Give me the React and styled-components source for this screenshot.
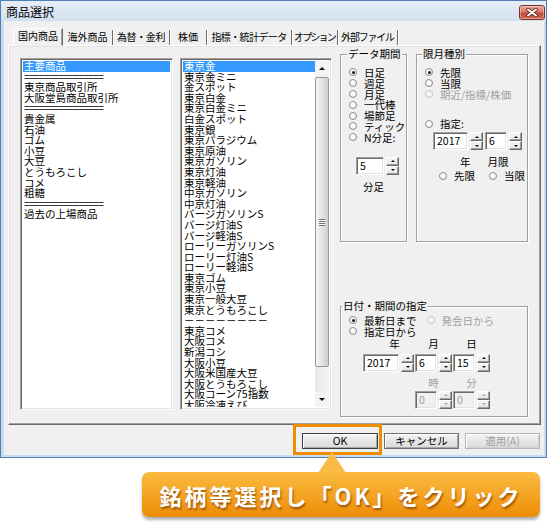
import React from 'react';
import styled, { createGlobalStyle, css } from 'styled-components';

const UI_FONT = `"Noto Sans CJK JP", "Noto Sans", sans-serif`;

const GlobalStyle = createGlobalStyle`
  html, body {
    margin: 0;
    padding: 0;
    background: #fff;
  }
  body {
    font-family: ${UI_FONT};
  }
  * {
    box-sizing: border-box;
  }
`;

const Page = styled.div`
  width: 550px;
  height: 525px;
  overflow: hidden;
  font-family: ${UI_FONT};
  font-size: 10.5px;
  color: #000;
`;

const Window = styled.div`
  width: 547px;
  height: 458px;
  border: 1px solid #4f7fb3;
  background: #c9dbee;
  padding: 0 2px 2px 3px;
  display: flex;
  flex-direction: column;
`;

const TitleBar = styled.div`
  height: 20px;
  flex: none;
  display: flex;
  justify-content: space-between;
  align-items: flex-start;
  margin: 0 -2px 0 -3px;
  padding: 0 1px 0 5px;
  background: linear-gradient(#e6eef8, #d2e0f0);
`;

const Title = styled.div`
  font-size: 12px;
  line-height: 14px;
  padding-top: 4px;
`;

const CloseButton = styled.div`
  width: 26px;
  height: 15px;
  margin-top: 4px;
  border: 1px solid #7d3129;
  border-radius: 3px;
  background: linear-gradient(#eaa899 0%, #d77766 45%, #c24a38 55%, #d06a52 100%);
  box-shadow: inset 0 0 0 1px rgba(255, 255, 255, 0.35);
  display: flex;
  align-items: center;
  justify-content: center;
`;

const Client = styled.div`
  flex: 1;
  background: #f0f0f0;
  padding: 7px 3px 0 4px;
  display: flex;
  flex-direction: column;
`;

const TabRow = styled.div`
  display: flex;
  align-items: flex-end;
  height: 17px;
  padding-left: 5px;
`;

const Tab = styled.div`
  width: ${p => p.$w}px;
  display: flex;
  align-items: center;
  justify-content: center;
  white-space: nowrap;
  font-size: 10px;
  letter-spacing: ${p => p.$ls || 0}px;
  line-height: 12px;
  ${p =>
    p.$active
      ? css`
          height: 18px;
          margin-bottom: -1px;
          position: relative;
          z-index: 1;
          background: #f0f0f0;
          border: 1px solid;
          border-color: #fff #696969 transparent #fff;
          box-shadow: inset -1px 0 0 #a0a0a0;
          padding-bottom: 2px;
        `
      : css`
          height: 15px;
          border-right: 1px solid #6d6d6d;
          box-shadow: 1px 0 0 #fff;
          padding-bottom: 1px;
        `}
`;

const TabPanel = styled.div`
  height: 380px;
  flex: none;
  border: 1px solid;
  border-color: #fff #696969 #696969 #fff;
  box-shadow: inset -1px -1px 0 #a0a0a0, inset 1px 1px 0 #e3e3e3;
  display: flex;
  align-items: flex-start;
  padding: 8px 0 0 11px;
`;

const ListBox = styled.div`
  width: ${p => p.$w}px;
  height: 352px;
  margin-top: 4px;
  margin-right: ${p => p.$gap}px;
  flex: none;
  background: #fff;
  border: 1px solid;
  border-color: #a0a0a0 #fff #fff #a0a0a0;
  box-shadow: inset 1px 1px 0 #696969, inset -1px -1px 0 #e3e3e3;
  padding: 2px;
  display: flex;
  overflow: hidden;
`;

const Items = styled.div`
  flex: 1;
  overflow: hidden;
`;

const Item = styled.div`
  height: 10.6px;
  line-height: 10.6px;
  white-space: nowrap;
  padding-left: 1px;
  letter-spacing: ${p => (p.$rule ? '-0.9px' : '0')};
  ${p =>
    p.$selected &&
    css`
      background: #3399ff;
      color: #fff;
    `}
`;

const Scrollbar = styled.div`
  width: 14px;
  flex: none;
  display: flex;
  flex-direction: column;
  background: linear-gradient(90deg, #e9e9e9, #f4f4f4);
`;

const ScrollArrow = styled.div`
  height: 15px;
  flex: none;
  display: flex;
  align-items: center;
  justify-content: center;
  background: #f3f3f3;
`;

const ScrollTrack = styled.div`
  flex: 1;
`;

const Triangle = styled.span`
  width: 0;
  height: 0;
  border-left: ${p => p.$size}px solid transparent;
  border-right: ${p => p.$size}px solid transparent;
  ${p =>
    p.$up
      ? css`
          border-bottom: ${p.$size - 0.5}px solid ${p.$disabled ? '#a8a8a8' : '#111'};
        `
      : css`
          border-top: ${p.$size - 0.5}px solid ${p.$disabled ? '#a8a8a8' : '#111'};
        `}
`;

const Thumb = styled.div`
  height: 290px;
  margin: 1px 0;
  flex: none;
  border: 1px solid #989898;
  border-radius: 2px;
  background: linear-gradient(90deg, #f4f4f4, #e2e2e2 55%, #cdcdcd);
  display: flex;
  align-items: center;
  justify-content: center;
`;

const Grip = styled.div`
  width: 6px;
  height: 7px;
  background: repeating-linear-gradient(#6f6f6f 0 1px, #fafafa 1px 2px);
`;

const RightColumn = styled.div`
  width: 188px;
  flex: none;
  display: flex;
  flex-direction: column;
`;

const TopGroups = styled.div`
  display: flex;
  gap: 9px;
`;

const GroupBox = styled.div`
  position: relative;
  width: ${p => p.$w}px;
  height: ${p => p.$h}px;
  margin-top: ${p => p.$mt || 0}px;
  border: 1px solid #a0a0a0;
  box-shadow: inset 1px 1px 0 #fff, 1px 1px 0 #fff;
  padding: ${p => p.$pad};
  display: flex;
  flex-direction: column;
`;

const Legend = styled.span`
  position: absolute;
  top: -7px;
  left: ${p => p.$left}px;
  padding: 0 1px;
  line-height: 12px;
  background: #f0f0f0;
  white-space: nowrap;
`;

const RadioRow = styled.div`
  display: flex;
  align-items: center;
  height: 10.8px;
  gap: ${p => p.$gap || 0}px;
  margin-top: ${p => p.$mt || 0}px;
  padding-left: ${p => p.$pl || 0}px;
`;

const RadioItem = styled.span`
  display: inline-flex;
  align-items: center;
  gap: 7px;
  white-space: nowrap;
  color: ${p => (p.$disabled ? '#a0a0a0' : '#000')};
`;

const RadioDot = styled.span`
  position: relative;
  flex: none;
  width: 8px;
  height: 8px;
  border-radius: 50%;
  border: 1px solid ${p => (p.$disabled ? '#c6c6c6' : '#8c8c8c')};
  background: ${p => (p.$disabled ? '#f5f5f5' : 'radial-gradient(circle at 40% 35%, #fff 30%, #e3e3e3)')};
  ${p =>
    p.$checked &&
    css`
      &::after {
        content: '';
        position: absolute;
        inset: 0;
        margin: auto;
        width: 3px;
        height: 3px;
        border-radius: 50%;
        background: #1a1a1a;
      }
    `}
`;

const SpinRow = styled.div`
  display: flex;
  gap: ${p => p.$gap || 0}px;
  margin-top: ${p => p.$mt || 0}px;
  padding-left: ${p => p.$pl || 0}px;
`;

const SpinWrap = styled.div`
  display: flex;
  gap: 2px;
  height: 18px;
`;

const SpinEdit = styled.div`
  width: ${p => p.$w}px;
  height: 18px;
  border: 1px solid;
  border-color: #a0a0a0 #fff #fff #a0a0a0;
  box-shadow: inset 1px 1px 0 #696969, inset -1px -1px 0 #e3e3e3;
  background: ${p => (p.$disabled ? '#f0f0f0' : '#fff')};
  color: ${p => (p.$disabled ? '#a0a0a0' : '#000')};
  padding: 2px 0 0 3px;
  line-height: 11px;
`;

const SpinButtons = styled.div`
  width: 13px;
  display: flex;
  flex-direction: column;
`;

const SpinButton = styled.div`
  flex: 1;
  display: flex;
  align-items: center;
  justify-content: center;
  border: 1px solid;
  border-color: #fff #696969 #696969 #fff;
  box-shadow: inset -1px -1px 0 #a0a0a0;
  background: linear-gradient(#f6f6f6, #e4e4e4);
`;

const Caption = styled.div`
  height: 11px;
  line-height: 11px;
  white-space: nowrap;
  margin-top: ${p => p.$mt || 0}px;
  padding-left: ${p => p.$pl || 0}px;
  display: flex;
  gap: ${p => p.$gap || 0}px;
  color: ${p => (p.$disabled ? '#a0a0a0' : '#000')};
`;

const DateGrid = styled.div`
  display: grid;
  grid-template-columns: 51px 37px 37px;
  column-gap: 1px;
  margin-top: ${p => p.$mt || 0}px;
  padding-left: 14px;
  align-items: center;
  color: ${p => (p.$disabled ? '#a0a0a0' : '#000')};
`;

const GridLabel = styled.div`
  grid-column: ${p => p.$col};
  height: 11px;
  line-height: 11px;
  text-align: center;
  padding-left: ${p => p.$shift || 0}px;
`;

const GridCell = styled.div`
  grid-column: ${p => p.$col};
`;

const ButtonRow = styled.div`
  display: flex;
  justify-content: flex-end;
  gap: 6px;
  margin-top: 8px;
  padding-right: 1px;
`;

const Button = styled.div`
  position: relative;
  width: ${p => p.$w}px;
  height: 16px;
  display: flex;
  align-items: center;
  justify-content: center;
  border: 1px solid ${p => (p.$disabled ? '#b5b5b5' : p.$default ? '#3c3c3c' : '#707070')};
  background: linear-gradient(#f4f4f4, #e6e6e6 50%, #dadada);
  box-shadow: inset 1px 1px 0 #fff, inset -1px -1px 0 ${p => (p.$disabled ? '#d0d0d0' : '#a8a8a8')};
  color: ${p => (p.$disabled ? '#a0a0a0' : '#000')};
  line-height: 12px;
  ${p =>
    p.$highlight &&
    css`
      &::after {
        content: '';
        position: absolute;
        left: -10px;
        top: -10px;
        right: -5px;
        bottom: -7px;
        border: 3px solid #f08c00;
      }
    `}
`;

const Callout = styled.div`
  position: relative;
  z-index: 2;
  width: 398px;
  height: 45px;
  margin: 14px 0 0 142px;
  border-radius: 7px;
  background: linear-gradient(#f9ba3f 0%, #f5a524 50%, #ec8c06 100%);
  box-shadow: 0 3px 3px rgba(0, 0, 0, 0.3);
  display: flex;
  align-items: center;
  justify-content: center;
`;

const Pointer = styled.span`
  position: absolute;
  left: 176px;
  top: -20px;
  width: 0;
  height: 0;
  border-left: 14px solid transparent;
  border-right: 14px solid transparent;
  border-bottom: 21px solid #f9bb45;
`;

const CalloutText = styled.div`
  color: #fff;
  font-family: ${UI_FONT};
  font-size: 22px;
  font-weight: 700;
  letter-spacing: 3px;
  line-height: 26px;
  white-space: nowrap;
  text-shadow: 1px 2px 2px rgba(130, 60, 0, 0.75);
`;

const tabs = [
  { label: '国内商品', w: 50, active: true },
  { label: '海外商品', w: 50 },
  { label: '為替・金利', w: 57, ls: -0.4 },
  { label: '株価', w: 37 },
  { label: '指標・統計データ', w: 85, ls: -0.6 },
  { label: 'オプション', w: 46, ls: -1.8 },
  { label: '外部ファイル', w: 60, ls: -1.2 },
];

const RULE = '================';

const markets = [
  '主要商品', RULE, '東京商品取引所', '大阪堂島商品取引所', RULE,
  '貴金属', '石油', 'ゴム', '小豆', '大豆', 'とうもろこし', 'コメ', '粗糖', RULE,
  '過去の上場商品',
];

const products = [
  '東京金', '東京金ミニ', '金スポット', '東京白金', '東京白金ミニ', '白金スポット',
  '東京銀', '東京パラジウム', '東京原油', '東京ガソリン', '東京灯油', '東京軽油',
  '中京ガソリン', '中京灯油', 'バージガソリンS', 'バージ灯油S', 'バージ軽油S',
  'ローリーガソリンS', 'ローリー灯油S', 'ローリー軽油S', '東京ゴム', '東京小豆',
  '東京一般大豆', '東京とうもろこし', '－－－－－－－－', '東京コメ', '大阪コメ',
  '新潟コシ', '大阪小豆', '大阪米国産大豆', '大阪とうもろこし', '大阪コーン75指数',
  '大阪冷凍えび', '大阪粗糖',
];

const periods = ['日足', '週足', '月足', '一代棒', '場節足', 'ティック', 'N分足:'];

function Radio({ label, checked, disabled }) {
  return (
    <RadioItem $disabled={disabled}>
      <RadioDot $checked={checked} $disabled={disabled} />
      {label}
    </RadioItem>
  );
}

function SpinBox({ value, editWidth, disabled }) {
  return (
    <SpinWrap>
      <SpinEdit $w={editWidth} $disabled={disabled}>{value}</SpinEdit>
      <SpinButtons>
        <SpinButton><Triangle $up $size={2.5} $disabled={disabled} /></SpinButton>
        <SpinButton><Triangle $size={2.5} $disabled={disabled} /></SpinButton>
      </SpinButtons>
    </SpinWrap>
  );
}

function CloseIcon() {
  return (
    <svg width="12" height="9" viewBox="0 0 12 9">
      <path d="M2 1.5 L10 7.5 M10 1.5 L2 7.5" stroke="#6b2119" strokeWidth="3.6" strokeLinecap="round" />
      <path d="M2 1.5 L10 7.5 M10 1.5 L2 7.5" stroke="#fff" strokeWidth="2" strokeLinecap="round" />
    </svg>
  );
}

export default function App() {
  return (
    <>
      <GlobalStyle />
      <Page>
        <Window>
          <TitleBar>
            <Title>商品選択</Title>
            <CloseButton><CloseIcon /></CloseButton>
          </TitleBar>
          <Client>
            <TabRow>
              {tabs.map(t => (
                <Tab key={t.label} $w={t.w} $ls={t.ls} $active={t.active}>{t.label}</Tab>
              ))}
            </TabRow>
            <TabPanel>
              <ListBox $w={153} $gap={7}>
                <Items>
                  {markets.map((m, i) => (
                    <Item key={i} $selected={i === 0} $rule={m === RULE}>{m}</Item>
                  ))}
                </Items>
              </ListBox>
              <ListBox $w={152} $gap={8}>
                <Items>
                  {products.map((m, i) => (
                    <Item key={i} $selected={i === 0}>{m}</Item>
                  ))}
                </Items>
                <Scrollbar>
                  <ScrollArrow><Triangle $up $size={3.5} /></ScrollArrow>
                  <Thumb><Grip /></Thumb>
                  <ScrollTrack />
                  <ScrollArrow><Triangle $size={3.5} /></ScrollArrow>
                </Scrollbar>
              </ListBox>
              <RightColumn>
                <TopGroups>
                  <GroupBox $w={67} $h={188} $pad="12px 0 0 8px">
                    <Legend $left={6}>データ期間</Legend>
                    {periods.map((p, i) => (
                      <RadioRow key={p}><Radio label={p} checked={i === 0} /></RadioRow>
                    ))}
                    <SpinRow $mt={14} $pl={7}>
                      <SpinBox value="5" editWidth={28} />
                    </SpinRow>
                    <Caption $mt={6} $pl={14}>分足</Caption>
                  </GroupBox>
                  <GroupBox $w={112} $h={188} $pad="12px 0 0 8px">
                    <Legend $left={5}>限月種別</Legend>
                    <RadioRow><Radio label="先限" checked /></RadioRow>
                    <RadioRow><Radio label="当限" /></RadioRow>
                    <RadioRow><Radio label="期近/指標/株価" disabled /></RadioRow>
                    <RadioRow $mt={19}><Radio label="指定:" /></RadioRow>
                    <SpinRow $mt={3} $pl={8} $gap={2}>
                      <SpinBox value="2017" editWidth={35} />
                      <SpinBox value="6" editWidth={22} />
                    </SpinRow>
                    <Caption $mt={6} $pl={35} $gap={17}>
                      <span>年</span>
                      <span>月限</span>
                    </Caption>
                    <RadioRow $mt={3} $pl={14} $gap={14}>
                      <Radio label="先限" />
                      <Radio label="当限" />
                    </RadioRow>
                  </GroupBox>
                </TopGroups>
                <GroupBox $w={188} $h={111} $mt={64} $pad="8px 0 0 8px">
                  <Legend $left={1}>日付・期間の指定</Legend>
                  <RadioRow $gap={10}>
                    <Radio label="最新日まで" checked />
                    <Radio label="発会日から" disabled />
                  </RadioRow>
                  <RadioRow><Radio label="指定日から" /></RadioRow>
                  <DateGrid $mt={1}>
                    <GridLabel $col={1} $shift={12}>年</GridLabel>
                    <GridLabel $col={2}>月</GridLabel>
                    <GridLabel $col={3}>日</GridLabel>
                  </DateGrid>
                  <DateGrid $mt={5}>
                    <GridCell $col={1}><SpinBox value="2017" editWidth={36} /></GridCell>
                    <GridCell $col={2}><SpinBox value="6" editWidth={22} /></GridCell>
                    <GridCell $col={3}><SpinBox value="15" editWidth={22} /></GridCell>
                  </DateGrid>
                  <DateGrid $mt={5} $disabled>
                    <GridLabel $col={2}>時</GridLabel>
                    <GridLabel $col={3}>分</GridLabel>
                  </DateGrid>
                  <DateGrid $mt={3}>
                    <GridCell $col={2}><SpinBox value="0" editWidth={22} disabled /></GridCell>
                    <GridCell $col={3}><SpinBox value="0" editWidth={22} disabled /></GridCell>
                  </DateGrid>
                </GroupBox>
              </RightColumn>
            </TabPanel>
            <ButtonRow>
              <Button $w={76} $default $highlight>OK</Button>
              <Button $w={75}>キャンセル</Button>
              <Button $w={75} $disabled>適用(A)</Button>
            </ButtonRow>
          </Client>
        </Window>
        <Callout>
          <Pointer />
          <CalloutText>銘柄等選択し「OK」をクリック</CalloutText>
        </Callout>
      </Page>
    </>
  );
}
